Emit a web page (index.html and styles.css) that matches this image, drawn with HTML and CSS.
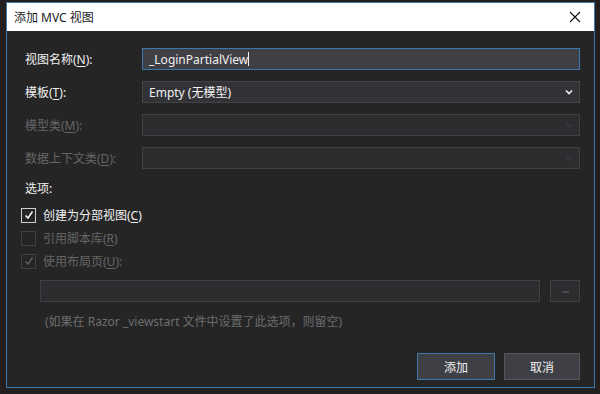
FILE: index.html
```html
<!DOCTYPE html>
<html lang="zh-CN">
<head>
    <meta charset="UTF-8">
    <title>添加 MVC 视图</title>
    <link rel="stylesheet" href="styles.css">
</head>
<body>
    <div class="window">
        <div class="titlebar">
            <span class="title">添加 MVC 视图</span>
            <svg class="close" width="12" height="12" viewBox="0 0 12 12">
                <path d="M1 1 L11 11 M11 1 L1 11" stroke="#111" stroke-width="1.1" fill="none"/>
            </svg>
        </div>
        <div class="content">
            <div class="form">
                <label class="lbl">视图名称(<u>N</u>):</label>
                <div class="field input focus">_LoginPartialView<span class="caret"></span></div>

                <label class="lbl">模板(<u>T</u>):</label>
                <div class="field select">
                    <span>Empty (无模型)</span>
                    <svg class="arrow" width="8" height="6" viewBox="0 0 8 6">
                        <path d="M1 1.5 L4 4.5 L7 1.5" stroke="#f1f1f1" stroke-width="1.6" fill="none"/>
                    </svg>
                </div>

                <label class="lbl off">模型类(<u>M</u>):</label>
                <div class="field select disabled">
                    <svg class="arrow" width="8" height="6" viewBox="0 0 8 6">
                        <path d="M1 1.5 L4 4.5 L7 1.5" stroke="#3a3a3e" stroke-width="1.6" fill="none"/>
                    </svg>
                </div>

                <label class="lbl off">数据上下文类(<u>D</u>):</label>
                <div class="field select disabled">
                    <svg class="arrow" width="8" height="6" viewBox="0 0 8 6">
                        <path d="M1 1.5 L4 4.5 L7 1.5" stroke="#3a3a3e" stroke-width="1.6" fill="none"/>
                    </svg>
                </div>
            </div>

            <div class="section">选项:</div>

            <div class="checks">
                <div class="check">
                    <span class="box on">
                        <svg width="12" height="12" viewBox="0 0 12 12"><path d="M2.5 6.5 L5 9 L9.5 2.5" stroke="#f1f1f1" stroke-width="1.6" fill="none"/></svg>
                    </span>
                    <span>创建为分部视图(<u>C</u>)</span>
                </div>
                <div class="check off">
                    <span class="box"></span>
                    <span>引用脚本库(<u>R</u>)</span>
                </div>
                <div class="check off">
                    <span class="box">
                        <svg width="12" height="12" viewBox="0 0 12 12"><path d="M2.5 6.5 L5 9 L9.5 2.5" stroke="#5a5a5e" stroke-width="1.6" fill="none"/></svg>
                    </span>
                    <span>使用布局页(<u>U</u>):</span>
                </div>
            </div>

            <div class="layout">
                <div class="field disabled wide"></div>
                <div class="browse"><span class="dash"></span></div>
            </div>
            <div class="hint">(如果在 Razor _viewstart 文件中设置了此选项，则留空)</div>

            <div class="buttons">
                <button class="btn primary">添加</button>
                <button class="btn">取消</button>
            </div>
        </div>
    </div>
</body>
</html>
```

FILE: styles.css
```css
*{
    box-sizing: border-box;
}
body{
    margin: 0;
    width: 600px;
    height: 394px;
    overflow: hidden;
    background-color: #221f1e;
    font-family: "Noto Sans", "Noto Sans CJK SC", sans-serif;
    font-size: 12px;
}
.window{
    margin: 2px 5px 0 6px;
    width: 589px;
    height: 386px;
    border: 1px solid #3a78ad;
    background-color: #252526;
    display: flex;
    flex-direction: column;
}
.titlebar{
    height: 28px;
    background-color: #ffffff;
    display: flex;
    align-items: center;
    justify-content: space-between;
    padding: 0 13px 0 7px;
    flex-shrink: 0;
}
.title{
    color: #1b1b1b;
    font-size: 12px;
}
.content{
    padding: 17px 14px 0 18px;
    color: #f1f1f1;
    display: flex;
    flex-direction: column;
}
.form{
    display: grid;
    grid-template-columns: 117px 1fr;
    row-gap: 11px;
    align-items: center;
}
.lbl{
    color: #f1f1f1;
}
.lbl.off{
    color: #656565;
}
u{
    text-decoration-thickness: 1px;
    text-underline-offset: 2px;
}
.field{
    height: 22px;
    border: 1px solid #434346;
    background-color: #333337;
    display: flex;
    align-items: center;
    padding: 0 6px;
    color: #f1f1f1;
}
.input.focus{
    border-color: #3a78ad;
    background-color: #3f3f46;
}
.caret{
    display: inline-block;
    width: 1px;
    height: 14px;
    background-color: #f1f1f1;
}
.select{
    justify-content: space-between;
}
.arrow{
    margin-left: auto;
}
.field.disabled{
    background-color: #2d2d30;
    border-color: #3f3f46;
}
.section{
    margin-top: 12px;
    line-height: 16px;
}
.checks{
    margin-top: 10px;
    margin-left: -4px;
    display: flex;
    flex-direction: column;
    gap: 7px;
}
.check{
    display: flex;
    align-items: center;
    gap: 7px;
    height: 16px;
}
.check.off{
    color: #656565;
}
.box{
    width: 15px;
    height: 15px;
    border: 1px solid #3f3f46;
    background-color: #252526;
    display: flex;
    align-items: center;
    justify-content: center;
}
.box.on{
    border-color: #d0d0d0;
    background-color: #252526;
}
.layout{
    margin-top: 11px;
    margin-left: 15px;
    display: flex;
    gap: 10px;
}
.wide{
    flex: 1;
}
.browse{
    width: 30px;
    height: 22px;
    border: 1px solid #3f3f46;
    background-color: #2d2d30;
    display: flex;
    align-items: center;
    justify-content: center;
}
.dash{
    width: 7px;
    height: 2px;
    background-color: #4a4a4f;
    margin-top: 2px;
}
.hint{
    margin: 10px 0 0 20px;
    color: #6d6d6d;
}
.buttons{
    margin-top: 23px;
    display: flex;
    justify-content: flex-end;
    gap: 9px;
}
.btn{
    width: 76px;
    height: 27px;
    border: 1px solid #555558;
    background-color: #3f3f46;
    color: #f1f1f1;
    font-family: "Noto Sans CJK SC", sans-serif;
    font-size: 12px;
    padding: 0;
}
.btn.primary{
    width: 78px;
    border-color: #3a78ad;
}
```
